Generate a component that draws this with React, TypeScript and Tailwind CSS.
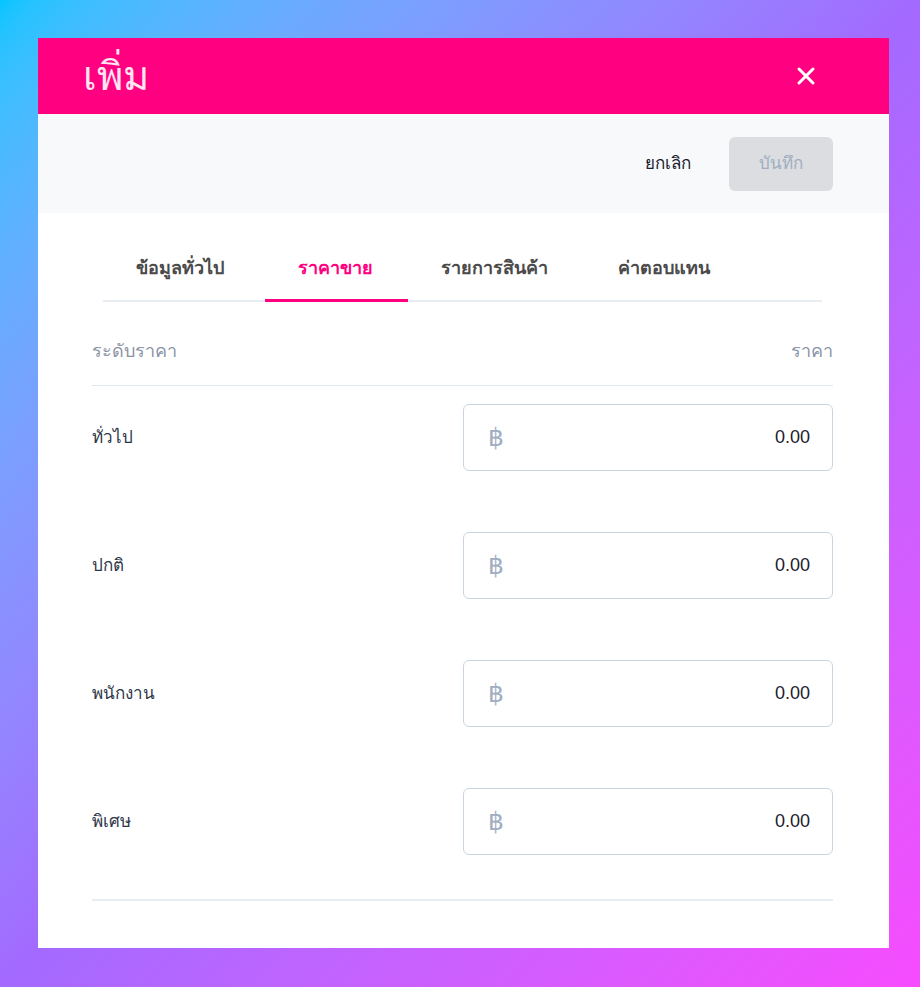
import { X } from "lucide-react";

const levels = ["ทั่วไป", "ปกติ", "พนักงาน", "พิเศษ"];
const tabs = [
  { label: "ข้อมูลทั่วไป", active: false, w: "w-[162px]" },
  { label: "ราคาขาย", active: true, w: "w-[143px]" },
  { label: "รายการสินค้า", active: false, w: "w-[177px]" },
  { label: "ค่าตอบแทน", active: false, w: "w-[169px]" },
];

function PriceRow({ label }: { label: string }) {
  return (
    <div className="flex h-[128px] items-start">
      <div className="flex h-[67px] flex-1 items-center text-[17px] text-[#2d3748]">{label}</div>
      <div className="flex h-[67px] w-[370px] items-center justify-between rounded-md border border-[#cbd5e0] bg-white pl-[24px] pr-[22px]">
        <span className="text-[25px] leading-none text-[#a0aec0]">฿</span>
        <span className="text-[18px] text-[#1a202c]">0.00</span>
      </div>
    </div>
  );
}

export default function App() {
  return (
    <div
      className="min-h-screen w-full bg-gradient-to-br from-[#00c6ff] via-[#a36aff] to-[#f74bff] pt-[38px] pl-[38px]"
      style={{ fontFamily: '"Liberation Sans", "Noto Sans", sans-serif' }}
    >
      <div className="h-[910px] w-[851px] bg-white">
        <div className="flex h-[76px] items-center justify-between bg-[#ff0080] pl-[45px] pr-[69px]">
          <h1 className="text-[40px] leading-none text-white/90">เพิ่ม</h1>
          <X size={28} strokeWidth={2.6} className="text-white" />
        </div>

        <div className="flex h-[99px] items-center justify-end gap-[38px] bg-[#f8f9fb] pr-[56px]">
          <button className="text-[17px] text-[#1a202c]">ยกเลิก</button>
          <button className="h-[54px] w-[104px] rounded-md bg-[#dcdde0] text-[17px] text-[#a0aec0]">บันทึก</button>
        </div>

        <div className="pl-[54px] pr-[56px] pt-[42px]">
          <div className="mx-[11px] flex border-b-2 border-[#e8edf3]">
            {tabs.map((t) => (
              <div
                key={t.label}
                className={`-mb-[2px] ${t.w} pb-[17px] pl-[33px] text-left text-[18px] font-semibold ${
                  t.active ? "border-b-[3px] border-[#ff0080] text-[#ff0080]" : "text-[#4a4a4a]"
                }`}
              >
                {t.label}
              </div>
            ))}
          </div>

          <div className="mt-[36px] flex items-center justify-between border-b border-[#e2e8f0] pb-[20px] text-[18px] text-[#8a94a6]">
            <span>ระดับราคา</span>
            <span>ราคา</span>
          </div>

          <div className="pt-[18px]">
            {levels.map((l) => (
              <PriceRow key={l} label={l} />
            ))}
          </div>
          <div className="-mt-[17px] border-b-2 border-[#e8edf3]" />
        </div>
      </div>
    </div>
  );
}
